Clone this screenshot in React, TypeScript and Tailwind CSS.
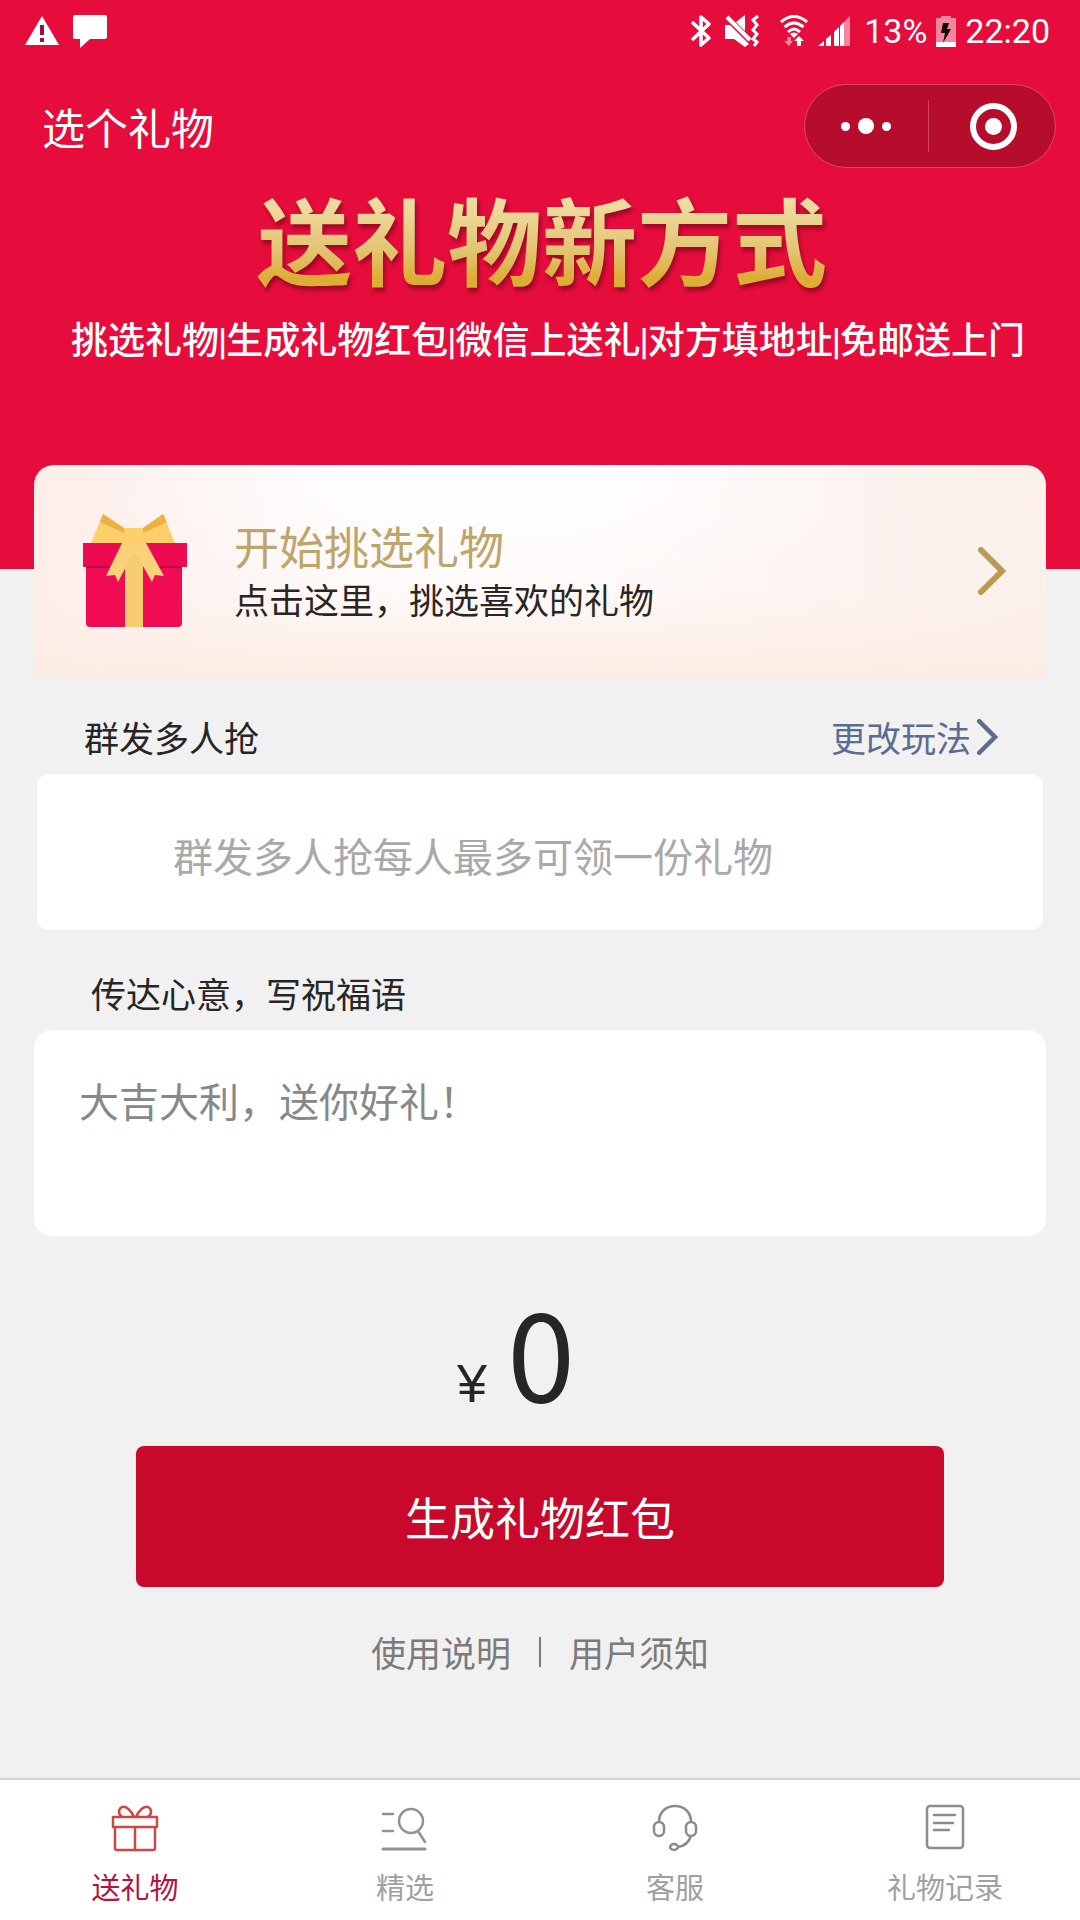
import React, { FC } from "react"

interface IconProps {
    className?: string
}

const Bluetooth: FC<IconProps> = ({ className }) => (
    <svg className={className} viewBox="0 0 22 34" fill="none" stroke="currentColor" strokeWidth="3.6" strokeLinejoin="round">
        <path d="M2 8L19 24L11 31V3L19 10L2 26" />
    </svg>
)

const Muted: FC<IconProps> = ({ className }) => (
    <svg className={className} viewBox="0 0 36 34" fill="none">
        <path d="M1 11H6L25 30L21 33L10 25H1Z" fill="currentColor" />
        <path d="M12 8L21 1V17Z" fill="currentColor" />
        <path d="M3 3L26 26" stroke="currentColor" strokeWidth="4" />
        <path d="M34 2L29 6L33 11L29 16L33 20L29 25L33 28L30 32" stroke="currentColor" strokeWidth="3" />
    </svg>
)

const Wifi: FC<IconProps> = ({ className }) => (
    <svg className={className} viewBox="0 0 28 34" fill="none">
        <path d="M1 8Q14 -3 27 8M4.500 13Q14 5 23.500 13M8 18Q14 12 20 18" stroke="currentColor" strokeWidth="3" />
        <path d="M10 20Q14 17 18 20L14 24Z" fill="currentColor" />
        <path d="M19 22L24 27H21V32H17V27H14Z" fill="currentColor" />
        <path d="M9 32L4 27H7V23H11V27H13Z" fill="currentColor" opacity=".5" />
    </svg>
)

const Signal: FC<IconProps> = ({ className }) => (
    <svg className={className} viewBox="0 0 32 34" fill="currentColor">
        <path d="M0 32L6 27V32ZM8 25L13 21V32H8ZM16 18L21 13V32H16Z" />
        <path d="M22 12L26 8V32H22Z" />
        <path d="M26 8L32 2V32H26Z" opacity=".5" />
    </svg>
)

const Battery: FC<IconProps> = ({ className }) => (
    <svg className={className} viewBox="0 0 22 34">
        <path d="M1 4H6V2H16V4H21V28H1Z" fill="#fff" opacity=".5" />
        <path d="M1 28H21V33H1Z" fill="#fff" />
        <path d="M8 9H14L12 15H16L8 29L10 19H6Z" fill="#120306" />
    </svg>
)

const GiftBox: FC<IconProps> = ({ className }) => (
    <svg className={className} viewBox="0 0 106 116">
        <path d="M4 52H100V110Q100 114 96 114H8Q4 114 4 110Z" fill="#f10b53" />
        <path d="M9 30L21 1L42 15H62L81 1L93 30Z" fill="#fbd06a" />
        <path d="M21 1L42 15V20L18 9ZM81 1L61 15V20L85 9Z" fill="#efb043" />
        <path d="M1 30H105V54H1Z" fill="#ee0a52" />
        <path d="M4 54H100" stroke="#b90b4a" strokeWidth="2" />
        <path d="M43 30H61V114H43Z" fill="#f5cd6e" />
        <path d="M40 30L24 63L33 62L36 69L48 46L52 40L57 46L70 69L73 62L82 63L64 30Z" fill="#fbd27a" />
    </svg>
)

const ChevronRight: FC<IconProps> = ({ className }) => (
    <svg className={className} viewBox="0 0 28 48" fill="none" stroke="currentColor" strokeLinecap="round">
        <path d="M3 3L24 24L3 45" />
    </svg>
)

const GiftIcon = () => (
    <svg className="size-12" viewBox="0 0 48 48" fill="none" stroke="#cf4744" strokeWidth="2.500" strokeLinejoin="round">
        <path d="M2 13H46V23H2ZM4 23H44V44Q44 46 42 46H6Q4 46 4 44ZM24 23V46" />
        <path d="M23 13C20 6 15 2 11 3C7 5 7 10 11 13M25 13C28 6 33 2 37 3C41 5 41 10 37 13" />
    </svg>
)

const FeaturedIcon = () => (
    <svg className="size-12" viewBox="0 0 48 48" fill="none" stroke="#929292" strokeWidth="2.500" strokeLinecap="round">
        <path d="M2 10H12M2 27H12" />
        <path d="M2 45H44" strokeWidth="3" />
        <circle cx="30" cy="17" r="12" />
        <path d="M37 27L44 38" />
    </svg>
)

const ServiceIcon = () => (
    <svg className="size-12" viewBox="0 0 48 48" fill="none" stroke="#8c8c8c" strokeWidth="2.500">
        <path d="M8 18C8 8 15 2 24 2S40 8 40 18" />
        <rect x="3" y="18" width="10" height="14" rx="5" />
        <rect x="35" y="18" width="10" height="14" rx="5" />
        <path d="M40 32C38 38 34 42 27 43" />
        <ellipse cx="23" cy="43" rx="4" ry="3" />
    </svg>
)

const RecordIcon = () => (
    <svg className="size-12" viewBox="0 0 48 48" fill="none" stroke="#8c8c8c" strokeWidth="2.500" strokeLinecap="round">
        <rect x="6" y="2" width="36" height="42" rx="3" />
        <path d="M13 11H34M13 19H32M13 26H28" />
    </svg>
)

const slogans = ["挑选礼物", "生成礼物红包", "微信上送礼", "对方填地址", "免邮送上门"]

const tabs = [
    { label: "送礼物", icon: <GiftIcon />, active: true },
    { label: "精选", icon: <FeaturedIcon />, active: false },
    { label: "客服", icon: <ServiceIcon />, active: false },
    { label: "礼物记录", icon: <RecordIcon />, active: false },
]

const StatusBar = () => (
    <div className="flex h-[62px] items-center justify-between pr-[30px] pl-6 font-[Roboto,sans-serif] text-[34px] leading-[40px]">
        <div className="flex gap-3">
            <svg className="h-9 w-9" viewBox="0 0 36 36">
                <path d="M18 3L35 32H1Z" fill="#fff" />
                <path d="M16 12H20V22H16ZM16 25H20V29H16Z" fill="#a50b45" />
            </svg>
            <svg className="h-9 w-9" viewBox="0 0 36 36" fill="#fff">
                <path d="M3 2H33Q35 2 35 4V24Q35 26 33 26H18L8 35V26H3Q1 26 1 24V4Q1 2 3 2Z" />
            </svg>
        </div>
        <div className="flex items-center">
            <Bluetooth className="mr-3 h-[34px] w-[22px]" />
            <Muted className="mr-5 h-[34px] w-9" />
            <Wifi className="mr-2.5 h-[34px] w-7" />
            <Signal className="mr-3.5 h-[34px] w-8" />
            <span>13%</span>
            <Battery className="mx-2 h-[34px] w-[22px]" />
            <span>22:20</span>
        </div>
    </div>
)

const Header = () => (
    <header className="bg-[#e60d3c] pb-[202px] text-white">
        <StatusBar />
        <div className="mt-[22px] flex items-center justify-between pr-6 pl-[42px]">
            <h1 className="text-[43px] leading-[50px]">选个礼物</h1>
            <div className="flex h-[84px] w-[252px] items-center rounded-full border border-[#e0455f] bg-[#b60d2d]">
                <button type="button" aria-label="更多" className="flex h-full flex-1 items-center justify-center gap-2">
                    <span className="size-[9px] rounded-full bg-white" />
                    <span className="size-4 rounded-full bg-white" />
                    <span className="size-[9px] rounded-full bg-white" />
                </button>
                <span className="h-[52px] w-px bg-[#d0405a]" />
                <button type="button" aria-label="关闭" className="flex h-full flex-1 items-center justify-center pl-1">
                    <span className="flex size-[47px] items-center justify-center rounded-full border-6 border-white">
                        <span className="size-[17px] rounded-full bg-white" />
                    </span>
                </button>
            </div>
        </div>
        <div className="mt-5 text-center">
            <h2 className="bg-linear-to-b from-[#eedca0] from-15% via-[#e3c674] via-60% to-[#dcae35] to-90% bg-clip-text pl-1 text-[95px] leading-[100px] font-bold text-transparent drop-shadow-[2px_4px_2px_rgba(110,0,20,0.6)]">
                送礼物新方式
            </h2>
            <p className="mt-[25px] pl-4 text-[37px] leading-[50px] font-medium whitespace-nowrap">
                {slogans.map((slogan, i) => (
                    <React.Fragment key={slogan}>
                        {i > 0 && <span className="-mx-px font-[Roboto,sans-serif]">|</span>}
                        {slogan}
                    </React.Fragment>
                ))}
            </p>
        </div>
    </header>
)

const PickCard = () => (
    <button
        type="button"
        className="-mt-26 flex h-[212px] w-full items-center rounded-t-[20px] bg-[#fef9f6] bg-[radial-gradient(ellipse_at_45%_0%,#ffffff_0%,transparent_50%),linear-gradient(180deg,transparent_60%,#fcede3_100%),linear-gradient(90deg,#fdeeea_0%,#fef9f8_30%,#fef9f8_55%,#fbf0eb_100%)] pr-10 pl-12 text-left"
    >
        <GiftBox className="h-[116px] w-[106px]" />
        <span className="ml-[46px] flex flex-1 flex-col">
            <span className="text-[45px] leading-[56px] text-[#bda56c]">开始挑选礼物</span>
            <span className="text-[35px] leading-[50px] text-[#2b2522]">点击这里，挑选喜欢的礼物</span>
        </span>
        <ChevronRight className="h-12 w-7 stroke-6 text-[#b99b56]" />
    </button>
)

const App: FC = () => {
    return (
        <div className="flex min-h-screen flex-col bg-[#f1f1f1] font-['Noto_Sans_CJK_SC',sans-serif] text-[#262626]">
            <Header />
            <main className="flex flex-col px-[34px]">
                <PickCard />

                <div className="mt-[35px] flex items-center justify-between pr-12 pl-[50px] text-[35px] leading-[50px]">
                    <label htmlFor="mode">群发多人抢</label>
                    <a href="#mode" className="flex items-center gap-1.5 text-[#5c6b92]">
                        更改玩法
                        <ChevronRight className="h-9 w-[21px] stroke-6" />
                    </a>
                </div>
                <input
                    id="mode"
                    type="text"
                    placeholder="群发多人抢每人最多可领一份礼物"
                    className="mx-[3px] mt-3 h-[156px] rounded-xl bg-white pt-1.5 pl-34 text-[40px] outline-none placeholder:text-[#a9a9a9]"
                />

                <label htmlFor="wish" className="mt-[38px] pl-[57px] text-[35px] leading-[50px]">
                    传达心意，写祝福语
                </label>
                <textarea
                    id="wish"
                    placeholder="大吉大利，送你好礼！"
                    className="mt-3 h-[206px] resize-none rounded-[18px] bg-white px-[45px] pt-10 text-[40px] leading-[60px] outline-none placeholder:text-[#888]"
                />

                <div className="mt-[53px] flex h-[120px] items-baseline justify-center gap-5 pr-12 leading-[120px]">
                    <span className="font-['Liberation_Sans',sans-serif] text-[54px]">¥</span>
                    <span className="text-[122px]">0</span>
                </div>

                <button type="button" className="mx-[102px] mt-[37px] h-[141px] rounded-lg bg-[#c9092c] text-[45px] text-white">
                    生成礼物红包
                </button>

                <div className="mt-10 mb-10 flex items-center justify-center gap-7 text-[35px] leading-[50px] text-[#7b7b7b]">
                    <a href="#help">使用说明</a>
                    <span className="h-[30px] w-0.5 bg-[#7b7b7b]" />
                    <a href="#terms">用户须知</a>
                </div>
            </main>

            <nav className="mt-auto grid grid-cols-4 border-t-2 border-[#d2d2d2] bg-white pt-6 pb-3">
                {tabs.map(({ label, icon, active }) => (
                    <a
                        key={label}
                        href={"#" + label}
                        className={
                            active
                                ? "flex flex-col items-center gap-3 text-[29px] leading-[44px] text-[#b5123f]"
                                : "flex flex-col items-center gap-3 text-[29px] leading-[44px] text-[#a0a0a0]"
                        }
                    >
                        {icon}
                        {label}
                    </a>
                ))}
            </nav>
        </div>
    )
}

export default App
